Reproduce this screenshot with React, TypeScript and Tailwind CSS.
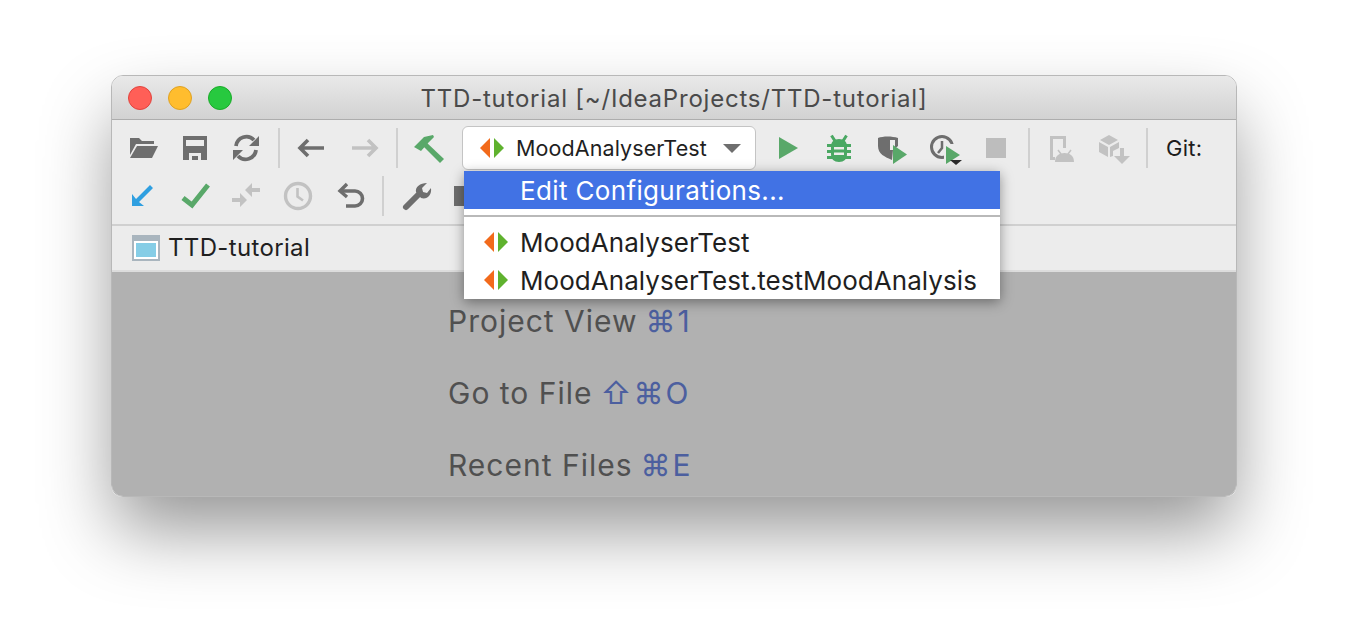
import React from "react";

const GRAY = "#6e6e6e";
const LIGHT = "#c2c2c2";
const GREEN = "#59a869";

const Svg = ({ children }: { children: React.ReactNode }) => (
  <svg width={32} height={32} viewBox="0 0 32 32" className="shrink-0 overflow-visible">
    {children}
  </svg>
);

const Slot = ({ w, children }: { w: number; children: React.ReactNode }) => (
  <div className="flex shrink-0 items-center justify-center" style={{ width: w }}>
    {children}
  </div>
);

const Sep = () => <div className="h-10 w-0.5 shrink-0 bg-[#d0d0d0]" />;

const RunConfigIcon = () => (
  <svg width={24} height={20} viewBox="0 0 24 20" className="shrink-0">
    <path d="M10 0v20L0 10z" fill="#f26a1b" />
    <path d="M14 0v20l10-10z" fill="#5fb22e" />
  </svg>
);

const FolderIcon = () => (
  <Svg>
    <path d="M2 6h9l3 3h12v3H8L2 23z" fill={GRAY} />
    <path d="M9 14h21l-6 12H2z" fill={GRAY} />
  </Svg>
);

const SaveIcon = () => (
  <Svg>
    <path
      fillRule="evenodd"
      d="M4 4h24v24H4zM7 8v6h18V8zM10 21v7h3v-4h6v4h3v-7z"
      fill={GRAY}
    />
  </Svg>
);

const SyncIcon = () => (
  <Svg>
    <path d="M6 14a10.500 10.500 0 0 1 18-6" fill="none" stroke={GRAY} strokeWidth={3.800} />
    <path d="M26 18a10.500 10.500 0 0 1-18 6" fill="none" stroke={GRAY} strokeWidth={3.800} />
    <path d="M29 4v10H19zM3 28V18h10z" fill={GRAY} />
  </Svg>
);

const ArrowLeft = () => (
  <Svg>
    <path d="M29 16H6M13 8l-8 8 8 8" fill="none" stroke={GRAY} strokeWidth={3.600} />
  </Svg>
);

const ArrowRight = () => (
  <Svg>
    <path d="M3 16h23M19 8l8 8-8 8" fill="none" stroke={LIGHT} strokeWidth={3.600} />
  </Svg>
);

const HammerIcon = () => (
  <Svg>
    <path d="M1 15 11 5l9-2 1 2-5 5-8 9z" fill={GREEN} />
    <path d="M13 10l18 17-4 4-17-17z" fill={GREEN} />
  </Svg>
);

const PlayIcon = () => (
  <Svg>
    <path d="M6 5v22l19-11z" fill={GREEN} />
  </Svg>
);

const BugIcon = () => (
  <Svg>
    <path d="M12 9L8.500 3.500M20 9l3.500-5.500" stroke="#4aa863" strokeWidth={3} />
    <path d="M4 12h24v3H4zM4 18h24v3H4zM4 24h24v3H4z" fill="#4aa863" />
    <path d="M8 14c0-4 3-7 8-7s8 3 8 7v8c0 5-3 8-8 8s-8-3-8-8z" fill="#4aa863" />
    <path d="M11 15h10v2.500H11zM11 20.500h10V23H11z" fill="#ececec" />
  </Svg>
);

const CoverageIcon = () => (
  <Svg>
    <path d="M1 6c5-2 14-2 20 0v8l-5 4-1 10C8 25 1 22 1 14z" fill={GRAY} />
    <path d="M13 8h5v10h-5z" fill="#ececec" />
    <path d="M16 13v19l14-9.500z" fill={GREEN} />
  </Svg>
);

const ProfilerIcon = () => (
  <Svg>
    <circle cx={12} cy={15} r={10.500} fill="none" stroke={GRAY} strokeWidth={3} />
    <path d="M12 9v7l-4 5" fill="none" stroke={GRAY} strokeWidth={2.500} />
    <path d="M14 12h15v17H14z" fill="#ececec" />
    <path d="M16 14v18l14-9z" fill={GREEN} />
    <path d="M20 28h12l-6 5z" fill="#2b2b2b" />
  </Svg>
);

const StopIcon = () => (
  <Svg>
    <path d="M6 6h20v20H6z" fill="#bdbdbd" />
  </Svg>
);

const AndroidIcon = () => (
  <Svg>
    <path d="M4 4h16v12h-3V7H7v18h2v3H4z" fill={LIGHT} />
    <path d="M9 30c0-6 4-9 9.500-9s9.500 3 9.500 9z" fill={LIGHT} />
    <path d="M12 18l3 4M25 18l-3 4" stroke={LIGHT} strokeWidth={1.500} />
  </Svg>
);

const PackageIcon = () => (
  <Svg>
    <path d="M1 8l9-5 9 5-9 5z" fill={LIGHT} />
    <path d="M0 10l9 5v10l-9-5z" fill={LIGHT} />
    <path d="M11 15l9-5v6l-6 3v5l-3 1z" fill={LIGHT} />
    <path d="M21 16h4v8h6l-8 8-8-8h6z" fill={LIGHT} />
  </Svg>
);

const UpdateIcon = () => (
  <Svg>
    <path d="M5 14v12h12l-5-4 14-14-3-3-14 14z" fill="#2f9fe0" />
  </Svg>
);

const CheckIcon = () => (
  <Svg>
    <path d="M4 18l9 7L29 5" fill="none" stroke={GREEN} strokeWidth={5} />
  </Svg>
);

const CompareIcon = () => (
  <Svg>
    <path d="M15 10l7-7v5h8v4h-8v5z" fill={LIGHT} />
    <path d="M17 20l-7-7v5H2v4h8v5z" fill={LIGHT} />
  </Svg>
);

const HistoryIcon = () => (
  <Svg>
    <circle cx={16} cy={16} r={12.500} fill="none" stroke={LIGHT} strokeWidth={3.400} />
    <path d="M15.500 8v8.500l5.500 4" fill="none" stroke={LIGHT} strokeWidth={2.600} />
  </Svg>
);

const UndoIcon = () => (
  <Svg>
    <path d="M12 4l-7 7 7 6" fill="none" stroke={GRAY} strokeWidth={3.400} />
    <path d="M5 11h15a7.500 7.500 0 0 1 0 15h-9" fill="none" stroke={GRAY} strokeWidth={3.600} />
  </Svg>
);

const WrenchIcon = () => (
  <Svg>
    <path d="M6 27l14-14" stroke={GRAY} strokeWidth={6} strokeLinecap="round" />
    <path d="M16 12C15 7 20 3 27 3l-5 5 1 4 4 1 4-5c1 7-4 12-10 10z" fill={GRAY} />
  </Svg>
);

const ProjectIcon = () => (
  <div className="flex h-[26px] w-7 shrink-0 flex-col border-x-2 border-b-2 border-t-[6px] border-[#a9b5be] bg-white p-0.5">
    <div className="flex-1 bg-[#85cde6]" />
  </div>
);

const Hint = ({ label, keys }: { label: string; keys: string }) => (
  <div className="flex h-[72px] items-center text-[30px] tracking-[1px] text-[#505050]">
    {label}
    <span className="ml-2 tracking-[2px] text-[#4c5f9f]">{keys}</span>
  </div>
);

export default function App() {
  return (
    <div
      className="h-[644px] w-[1348px] overflow-hidden bg-white pl-[111px] pt-[75px]"
      style={{ fontFamily: "Inter, 'Noto Sans', 'DejaVu Sans', sans-serif" }}
    >
      <div className="relative flex h-[422px] w-[1126px] flex-col overflow-hidden rounded-xl border border-[#b8b8b8] shadow-[0_36px_72px_-4px_rgba(0,0,0,0.42)]">
        {/* title bar */}
        <div className="relative flex h-11 shrink-0 items-center justify-center border-b border-[#adadad] bg-gradient-to-b from-[#e9e9e9] to-[#d2d2d2] pt-[3px]">
          <span className="text-[24px] tracking-[0.78px] text-[#4a4a4a]">TTD-tutorial [~/IdeaProjects/TTD-tutorial]</span>
          <div className="absolute left-4 top-[10px] flex gap-4">
            <div className="size-6 rounded-full border border-[#e0443e] bg-[#ff5f57]" />
            <div className="size-6 rounded-full border border-[#dea123] bg-[#ffbd2e]" />
            <div className="size-6 rounded-full border border-[#1aab29] bg-[#27c93f]" />
          </div>
        </div>

        {/* toolbar */}
        <div className="relative h-[106px] shrink-0 border-b-2 border-[#d0d0d0] bg-[#ececec]">
          <div className="box-content flex h-12 items-center pl-[6px] pt-1">
            <Slot w={52}><FolderIcon /></Slot>
            <Slot w={50}><SaveIcon /></Slot>
            <Slot w={52}><SyncIcon /></Slot>
            <Slot w={14}><Sep /></Slot>
            <Slot w={50}><ArrowLeft /></Slot>
            <Slot w={58}><ArrowRight /></Slot>
            <Slot w={6}><Sep /></Slot>
            <Slot w={58}><HammerIcon /></Slot>
            <div className="ml-1 mr-2 flex h-[44px] w-[294px] shrink-0 items-center rounded-md border border-[#c4c4c4] bg-white pl-[17px] text-[21.5px] tracking-[0.1px] text-[#1f1f1f]">
              <RunConfigIcon />
              <span className="ml-[12px]">MoodAnalyserTest</span>
              <svg width={18} height={9} viewBox="0 0 18 9" className="ml-auto mr-[14px]">
                <path d="M0 0h18l-9 9z" fill={GRAY} />
              </svg>
            </div>
            <Slot w={50}><PlayIcon /></Slot>
            <Slot w={50}><BugIcon /></Slot>
            <Slot w={58}><CoverageIcon /></Slot>
            <Slot w={48}><ProfilerIcon /></Slot>
            <Slot w={52}><StopIcon /></Slot>
            <Slot w={14}><Sep /></Slot>
            <Slot w={52}><AndroidIcon /></Slot>
            <Slot w={54}><PackageIcon /></Slot>
            <Slot w={10}><Sep /></Slot>
            <span className="ml-[14px] text-[22px] tracking-[0.3px] text-[#1c1c1c]">Git:</span>
          </div>
          <div className="flex h-12 items-center pl-[6px]">
            <Slot w={50}><UpdateIcon /></Slot>
            <Slot w={54}><CheckIcon /></Slot>
            <Slot w={48}><CompareIcon /></Slot>
            <Slot w={56}><HistoryIcon /></Slot>
            <Slot w={50}><UndoIcon /></Slot>
            <Slot w={14}><Sep /></Slot>
            <Slot w={52}><WrenchIcon /></Slot>
            <div className="ml-3 h-5 w-5 shrink-0 bg-[#6e6e6e]" />
          </div>
        </div>

        {/* navigation bar */}
        <div className="flex h-[46px] shrink-0 items-center gap-2 border-b-2 border-[#dcdcdc] bg-[#ececec] pl-5 text-[24px] tracking-[0.35px] text-[#1f1f1f]">
          <ProjectIcon />
          TTD-tutorial
        </div>

        {/* empty editor hints */}
        <div className="flex-1 bg-[#b1b1b1] pl-[336px] pt-[13px]">
          <Hint label="Project View" keys="⌘1" />
          <Hint label="Go to File" keys="⇧⌘O" />
          <Hint label="Recent Files" keys="⌘E" />
        </div>

        {/* run configurations popup */}
        <div className="absolute left-[352px] top-[95px] w-[536px] bg-white text-[26px] tracking-[0.05px] text-[#1f1f1f] shadow-[0_3px_12px_rgba(0,0,0,0.4)]">
          <div className="flex h-[38px] items-center bg-[#4172e4] pl-14 tracking-[0.35px] text-white">Edit Configurations...</div>
          <div className="flex h-3.5 items-center">
            <div className="h-0.5 w-full bg-[#b9b9b9]" />
          </div>
          <div className="flex h-[38px] items-center gap-3 pl-5">
            <RunConfigIcon />
            MoodAnalyserTest
          </div>
          <div className="flex h-[38px] items-center gap-3 pl-5">
            <RunConfigIcon />
            MoodAnalyserTest.testMoodAnalysis
          </div>
        </div>
      </div>
    </div>
  );
}
